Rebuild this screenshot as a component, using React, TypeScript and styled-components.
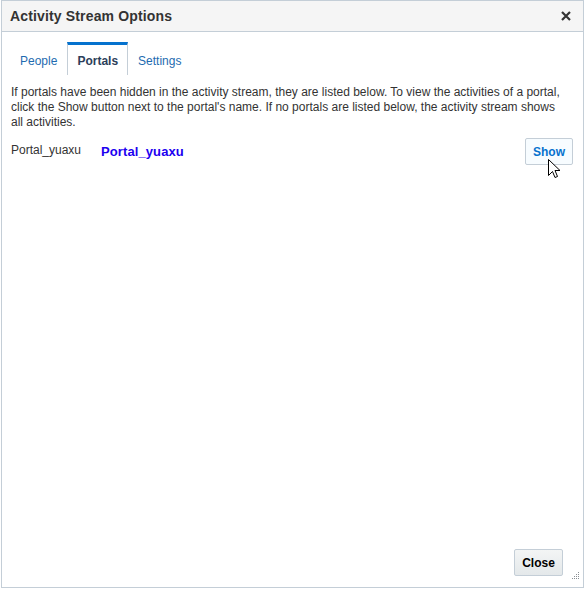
import React from "react";
import styled, { createGlobalStyle } from "styled-components";

const Global = createGlobalStyle`
  html, body { margin: 0; padding: 0; background: #ffffff; }
  body { font-family: "Liberation Sans", Arial, sans-serif; }
  * { box-sizing: border-box; }
`;

const Dialog = styled.div`
  position: relative;
  margin-left: 1px;
  width: 583px;
  height: 588px;
  border: 1px solid #c4ced7;
  background: #ffffff;
  display: flex;
  flex-direction: column;
`;

const Header = styled.div`
  height: 31px;
  flex: none;
  background: #f5f5f5;
  border-bottom: 1px solid #c4ced7;
  display: flex;
  align-items: center;
  justify-content: space-between;
  padding: 0 11px 0 8px;
`;

const Title = styled.h1`
  margin: 0;
  font-size: 14px;
  font-weight: bold;
  color: #333333;
  letter-spacing: 0.15px;
`;

const CloseX = styled.button`
  border: 0;
  background: transparent;
  padding: 0;
  width: 12px;
  height: 12px;
  display: flex;
  align-items: center;
  justify-content: center;
  cursor: pointer;
`;

const Body = styled.div`
  flex: 1;
  padding: 10px 10px 0 9px;
  display: flex;
  flex-direction: column;
`;

const TabBar = styled.div`
  display: flex;
  height: 33px;
  margin-left: -1px;
`;

const Tab = styled.div<{ $active?: boolean }>`
  display: flex;
  align-items: center;
  padding: 1px 9px 0 9px;
  font-size: 12px;
  font-weight: ${(p) => (p.$active ? "bold" : "normal")};
  color: ${(p) => (p.$active ? "#2c3e5a" : "#1e6bb0")};
  border-top: 3px solid ${(p) => (p.$active ? "#0572ce" : "transparent")};
  border-left: 1px solid ${(p) => (p.$active ? "#c4ced7" : "transparent")};
  border-right: 1px solid ${(p) => (p.$active ? "#c4ced7" : "transparent")};
`;

const Intro = styled.p`
  margin: 10px 0 0 0;
  font-size: 12px;
  line-height: 15px;
  color: #333333;
  padding-right: 9px;
`;

const PortalRow = styled.div`
  margin-top: 8px;
  display: flex;
  align-items: center;
  height: 27px;
`;

const PortalLabel = styled.span`
  width: 90px;
  font-size: 12px;
  color: #333333;
  margin-top: -3px;
`;

const PortalLink = styled.a`
  font-size: 13px;
  font-weight: bold;
  color: #2000f0;
  text-decoration: none;
  flex: 1;
  margin-top: -1px;
  letter-spacing: 0.1px;
`;

const Button = styled.button<{ $variant?: "show" | "close" }>`
  height: 27px;
  padding: 0;
  font-family: "Liberation Sans", Arial, sans-serif;
  font-size: 12px;
  font-weight: bold;
  border: 1px solid #c4ced7;
  border-radius: 2px;
  cursor: pointer;
  color: ${(p) => (p.$variant === "show" ? "#0572ce" : "#000000")};
  background: ${(p) =>
    p.$variant === "show"
      ? "#f7fcff"
      : "linear-gradient(#f3f5f5, #e4e8ea)"};
  width: ${(p) => (p.$variant === "show" ? "48px" : "49px")};
`;

const Footer = styled.div`
  display: flex;
  justify-content: flex-end;
  padding: 0 20px 11px 0;
`;

const Grip = styled.svg`
  position: absolute;
  right: 3px;
  bottom: 7px;
`;

const Cursor = styled.svg`
  position: absolute;
  left: 546px;
  top: 158px;
`;

export default function App() {
  const gripDots: [number, number][] = [];
  for (let r = 0; r < 4; r++) {
    for (let c = 3 - r; c < 4; c++) {
      gripDots.push([c * 2, r * 2]);
    }
  }
  return (
    <>
      <Global />
      <Dialog>
        <Header>
          <Title>Activity Stream Options</Title>
          <CloseX aria-label="Close">
            <svg width="10" height="10" viewBox="0 0 10 10">
              <path d="M1 1 L9 9 M9 1 L1 9" stroke="#333" strokeWidth="2.2" />
            </svg>
          </CloseX>
        </Header>
        <Body>
          <TabBar>
            <Tab>People</Tab>
            <Tab $active>Portals</Tab>
            <Tab>Settings</Tab>
          </TabBar>
          <Intro>
            If portals have been hidden in the activity stream, they are listed below. To view the
            activities of a portal, click the Show button next to the portal's name. If no portals
            are listed below, the activity stream shows all activities.
          </Intro>
          <PortalRow>
            <PortalLabel>Portal_yuaxu</PortalLabel>
            <PortalLink href="#">Portal_yuaxu</PortalLink>
            <Button $variant="show">Show</Button>
          </PortalRow>
        </Body>
        <Footer>
          <Button $variant="close">Close</Button>
        </Footer>
        <Grip width="8" height="8" viewBox="0 0 8 8">
          {gripDots.map(([x, y], i) => (
            <rect key={i} x={x} y={y} width="1" height="1" fill="#8a8f94" />
          ))}
        </Grip>
        <Cursor width="13" height="21" viewBox="0 0 13 21">
          <path
            d="M0.5 0.5 L0.5 16.5 L4.5 12.5 L7 18.5 L9.5 17.5 L7 11.5 L12 11.5 Z"
            fill="#ffffff"
            stroke="#000000"
            strokeWidth="1"
            strokeLinejoin="miter"
          />
        </Cursor>
      </Dialog>
    </>
  );
}
